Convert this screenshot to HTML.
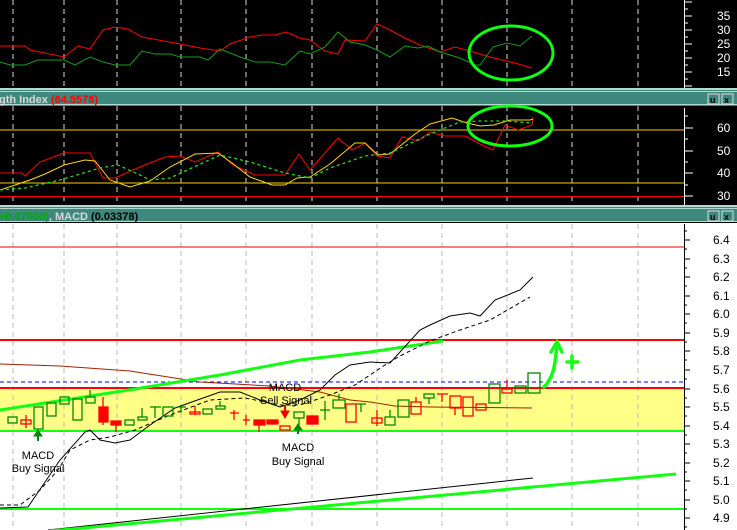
<!DOCTYPE html>
<html><head><meta charset="utf-8"><style>
html,body{margin:0;padding:0;background:#000;}
svg{display:block;font-family:"Liberation Sans",sans-serif;}
</style></head><body>
<svg width="737" height="530" viewBox="0 0 737 530" xmlns="http://www.w3.org/2000/svg">
<!-- top panel -->
<rect x="0" y="0" width="737" height="88" fill="#000"/>
<g stroke="#ddd" stroke-width="1" stroke-dasharray="5,4">
<line x1="13" y1="0" x2="13" y2="88"/><line x1="64" y1="0" x2="64" y2="88"/><line x1="117" y1="0" x2="117" y2="88"/><line x1="181" y1="0" x2="181" y2="88"/><line x1="246" y1="0" x2="246" y2="88"/><line x1="312" y1="0" x2="312" y2="88"/><line x1="377" y1="0" x2="377" y2="88"/><line x1="442" y1="0" x2="442" y2="88"/><line x1="507" y1="0" x2="507" y2="88"/><line x1="572" y1="0" x2="572" y2="88"/><line x1="638" y1="0" x2="638" y2="88"/>
</g>
<line x1="684.5" y1="0" x2="684.5" y2="88" stroke="#fff"/>
<g stroke="#fff"><line x1="684" y1="2" x2="692" y2="2"/><line x1="684" y1="16" x2="692" y2="16"/><line x1="684" y1="30" x2="692" y2="30"/><line x1="684" y1="44" x2="692" y2="44"/><line x1="684" y1="58" x2="692" y2="58"/><line x1="684" y1="72" x2="692" y2="72"/><line x1="684" y1="86" x2="692" y2="86"/>
<line x1="684" y1="9" x2="688" y2="9"/><line x1="684" y1="23" x2="688" y2="23"/><line x1="684" y1="37" x2="688" y2="37"/><line x1="684" y1="51" x2="688" y2="51"/><line x1="684" y1="65" x2="688" y2="65"/><line x1="684" y1="79" x2="688" y2="79"/></g>
<g fill="#fff" font-size="12"><text x="717" y="20">35</text><text x="717" y="34">30</text><text x="717" y="48">25</text><text x="717" y="62">20</text><text x="717" y="76">15</text></g>
<polyline fill="none" stroke="#f00" points="0,46 25,46 30,50 64,57 78,46 90,49 103,30 115,27 128,29 142,37 175,43 200,48 220,51 230,44 250,37 262,35 275,35 286,32 300,38 310,40 325,51 338,54 345,40 365,41 377,24 388,29 405,38 420,45 440,52 455,47 470,51 490,57 515,63 532,68"/>
<polyline fill="none" stroke="#1a9a1a" points="0,62 10,65 25,65 38,60 64,60 75,65 90,57 103,62 115,65 130,65 142,51 155,54 170,54 180,57 200,57 208,60 220,49 240,57 255,62 270,62 285,65 300,51 310,54 325,47 338,32 350,42 365,45 377,50 390,57 405,46 418,48 428,46 440,52 460,58 475,65 480,65 493,47 507,43 520,46 532,36"/>
<ellipse cx="511" cy="53" rx="42" ry="27" fill="none" stroke="#1f1" stroke-width="3"/>
<!-- separator 1 -->
<rect x="0" y="88" width="737" height="18" fill="#3f887d"/>
<rect x="0" y="88" width="737" height="2" fill="#b0dccf"/>
<rect x="0" y="91" width="737" height="1" fill="#b0dccf"/>
<rect x="0" y="104" width="737" height="1" fill="#b0dccf"/>
<text x="-1" y="103" font-size="11" font-weight="bold" fill="#d8d8d8">gth Index <tspan fill="#f00">(64.5578)</tspan></text>
<g><rect x="708" y="94" width="11" height="10" fill="#3f887d" stroke="#ddd"/><text x="710" y="103" font-size="9" font-weight="bold" fill="#000">u</text><rect x="722" y="94" width="11" height="10" fill="#3f887d" stroke="#ddd"/><text x="724" y="103" font-size="9" font-weight="bold" fill="#000">x</text></g>
<!-- RSI panel -->
<rect x="0" y="106" width="737" height="100" fill="#000"/>
<g stroke="#ddd" stroke-dasharray="5,4">
<line x1="13" y1="106" x2="13" y2="205"/><line x1="64" y1="106" x2="64" y2="205"/><line x1="117" y1="106" x2="117" y2="205"/><line x1="181" y1="106" x2="181" y2="205"/><line x1="246" y1="106" x2="246" y2="205"/><line x1="312" y1="106" x2="312" y2="205"/><line x1="377" y1="106" x2="377" y2="205"/><line x1="442" y1="106" x2="442" y2="205"/><line x1="507" y1="106" x2="507" y2="205"/><line x1="572" y1="106" x2="572" y2="205"/><line x1="638" y1="106" x2="638" y2="205"/>
</g>
<line x1="684.5" y1="108" x2="684.5" y2="205" stroke="#fff"/>
<g stroke="#fff"><line x1="684" y1="128" x2="693" y2="128"/><line x1="684" y1="151" x2="693" y2="151"/><line x1="684" y1="173" x2="693" y2="173"/><line x1="684" y1="196" x2="693" y2="196"/>
<line x1="684" y1="116" x2="688" y2="116"/><line x1="684" y1="139" x2="688" y2="139"/><line x1="684" y1="162" x2="688" y2="162"/><line x1="684" y1="185" x2="688" y2="185"/></g>
<g fill="#fff" font-size="12"><text x="717" y="132">60</text><text x="717" y="155">50</text><text x="717" y="177">40</text><text x="717" y="200">30</text></g>
<line x1="0" y1="130" x2="684" y2="130" stroke="#ffcc00"/>
<line x1="0" y1="183" x2="684" y2="183" stroke="#ffcc00"/>
<line x1="0" y1="196.5" x2="684" y2="196.5" stroke="#f00"/>
<polyline fill="none" stroke="#f00" points="0,173 22,173 25,176 40,162 64,153 90,153 103,178 115,178 140,167 165,157 180,156 195,162 218,152 233,165 255,175 285,175 299,154 310,170 338,138 352,150 365,143 377,156 390,158 402,137 418,141 430,132 445,136 465,136 482,145 493,150 505,125 518,130 532,125 533,117"/>
<polyline fill="none" stroke="#ffd700" points="0,190 30,180 45,174 64,165 85,160 95,161 110,180 130,187 150,181 170,167 195,154 218,153 232,163 250,177 272,185 285,185 297,178 310,177 330,164 355,143 365,143 378,155 390,154 415,134 430,124 452,118 467,123 480,126 494,125 510,120 530,120 533,119"/>
<polyline fill="none" stroke="#2d2" stroke-dasharray="3,3" stroke-width="1.3" points="0,190 25,188 60,180 100,168 118,165 140,175 150,180 170,178 220,155 250,162 285,173 310,178 330,168 365,156 390,153 430,134 460,122 480,121 505,121 533,123"/>
<ellipse cx="510" cy="126" rx="42" ry="20" fill="none" stroke="#1f1" stroke-width="3"/>
<!-- separator 2 -->
<rect x="0" y="205" width="737" height="18" fill="#3f887d"/>
<rect x="0" y="205" width="737" height="2" fill="#b0dccf"/>
<rect x="0" y="208" width="737" height="1" fill="#b0dccf"/>
<rect x="0" y="221" width="737" height="1" fill="#b0dccf"/>
<text x="-1" y="220" font-size="11" font-weight="bold" fill="#0a0">+0.07000)<tspan fill="#d8d8d8">, MACD </tspan><tspan fill="#000">(0.03378)</tspan></text>
<g><rect x="708" y="211" width="11" height="10" fill="#3f887d" stroke="#ddd"/><text x="710" y="220" font-size="9" font-weight="bold" fill="#000">u</text><rect x="722" y="211" width="11" height="10" fill="#3f887d" stroke="#ddd"/><text x="724" y="220" font-size="9" font-weight="bold" fill="#000">x</text></g>
<!-- bottom chart -->
<rect x="0" y="222" width="737" height="308" fill="#fff"/>
<line x1="0" y1="222.5" x2="737" y2="222.5" stroke="#000"/>
<rect x="0" y="388" width="684" height="43" fill="#ffff88"/>
<g stroke="#bbb" stroke-dasharray="5,4">
<line x1="13" y1="224" x2="13" y2="530"/><line x1="64" y1="224" x2="64" y2="530"/><line x1="117" y1="224" x2="117" y2="530"/><line x1="181" y1="224" x2="181" y2="530"/><line x1="246" y1="224" x2="246" y2="530"/><line x1="312" y1="224" x2="312" y2="530"/><line x1="377" y1="224" x2="377" y2="530"/><line x1="442" y1="224" x2="442" y2="530"/><line x1="507" y1="224" x2="507" y2="530"/><line x1="572" y1="224" x2="572" y2="530"/><line x1="638" y1="224" x2="638" y2="530"/>
</g>
<line x1="684.5" y1="224" x2="684.5" y2="530" stroke="#000"/>
<g stroke="#000">
<line x1="684" y1="240" x2="690" y2="240"/><line x1="684" y1="259" x2="690" y2="259"/><line x1="684" y1="277" x2="690" y2="277"/><line x1="684" y1="296" x2="690" y2="296"/><line x1="684" y1="314" x2="690" y2="314"/><line x1="684" y1="333" x2="690" y2="333"/><line x1="684" y1="351" x2="690" y2="351"/><line x1="684" y1="370" x2="690" y2="370"/><line x1="684" y1="389" x2="690" y2="389"/><line x1="684" y1="407" x2="690" y2="407"/><line x1="684" y1="426" x2="690" y2="426"/><line x1="684" y1="444" x2="690" y2="444"/><line x1="684" y1="463" x2="690" y2="463"/><line x1="684" y1="481" x2="690" y2="481"/><line x1="684" y1="500" x2="690" y2="500"/><line x1="684" y1="518" x2="690" y2="518"/>
<line x1="684" y1="231" x2="687" y2="231"/><line x1="684" y1="249" x2="687" y2="249"/><line x1="684" y1="268" x2="687" y2="268"/><line x1="684" y1="286" x2="687" y2="286"/><line x1="684" y1="305" x2="687" y2="305"/><line x1="684" y1="323" x2="687" y2="323"/><line x1="684" y1="342" x2="687" y2="342"/><line x1="684" y1="360" x2="687" y2="360"/><line x1="684" y1="379" x2="687" y2="379"/><line x1="684" y1="398" x2="687" y2="398"/><line x1="684" y1="416" x2="687" y2="416"/><line x1="684" y1="435" x2="687" y2="435"/><line x1="684" y1="453" x2="687" y2="453"/><line x1="684" y1="472" x2="687" y2="472"/><line x1="684" y1="490" x2="687" y2="490"/><line x1="684" y1="509" x2="687" y2="509"/><line x1="684" y1="527" x2="687" y2="527"/>
</g>
<g fill="#000" font-size="12">
<text x="713" y="244">6.4</text><text x="713" y="263">6.3</text><text x="713" y="281">6.2</text><text x="713" y="300">6.1</text><text x="713" y="318">6.0</text><text x="713" y="337">5.9</text><text x="713" y="355">5.8</text><text x="713" y="374">5.7</text><text x="713" y="393">5.6</text><text x="713" y="411">5.5</text><text x="713" y="430">5.4</text><text x="713" y="448">5.3</text><text x="713" y="467">5.2</text><text x="713" y="485">5.1</text><text x="713" y="504">5.0</text><text x="713" y="522">4.9</text>
</g>
<line x1="0" y1="247" x2="684" y2="247" stroke="#e00"/>
<line x1="0" y1="340" x2="684" y2="340" stroke="#f00" stroke-width="2"/>
<line x1="0" y1="382" x2="684" y2="382" stroke="#00e" stroke-dasharray="4,3"/>
<line x1="0" y1="388" x2="684" y2="388" stroke="#f00" stroke-width="2"/>
<line x1="0" y1="431" x2="684" y2="431" stroke="#1f1" stroke-width="2"/>
<line x1="0" y1="509" x2="684" y2="509" stroke="#1f1" stroke-width="2"/>
<line x1="48" y1="530" x2="533" y2="478" stroke="#000"/>
<line x1="50" y1="531" x2="676" y2="474" stroke="#1f1" stroke-width="3"/>
<polyline fill="none" stroke="#a02000" points="0,364 60,366 130,371 200,382 270,386 320,392 350,400 370,402 395,406 430,407 532,408"/>
<polyline fill="none" stroke="#1f1" stroke-width="3" points="0,410 135,389 220,375 300,360 370,352 443,341"/>
<polyline fill="none" stroke="#000" points="0,508 28,507 60,460 85,432 90,430 100,440 115,443 130,440 150,425 175,408 220,392 240,392 260,400 280,407 300,400 320,390 335,375 350,365 370,362 390,363 420,330 430,325 450,316 470,313 480,316 495,300 520,290 533,277"/>
<polyline fill="none" stroke="#000" stroke-dasharray="4,3" points="0,505 20,505 40,490 58,470 70,450 90,440 110,437 135,430 170,415 210,400 245,398 280,405 300,405 330,395 355,385 385,365 400,356 430,341 460,330 490,320 530,297"/>
<!-- candles -->
<g stroke-width="1.3">
<g stroke="#080" fill="none">
<rect x="8" y="417" width="9" height="6"/><rect x="34" y="407" width="9" height="22"/><rect x="47" y="403" width="9" height="13"/><rect x="60" y="397" width="9" height="7"/><rect x="73" y="399" width="9" height="21"/><rect x="86" y="397" width="9" height="6"/><line x1="90" y1="390" x2="90" y2="397"/>
<rect x="125" y="420" width="9" height="5"/><rect x="138" y="417" width="9" height="3"/><line x1="142" y1="408" x2="142" y2="417"/>
<line x1="150" y1="407" x2="161" y2="407"/><line x1="155" y1="407" x2="155" y2="418"/>
<rect x="163" y="407" width="10" height="9"/><line x1="177" y1="407" x2="186" y2="407"/><line x1="181" y1="407" x2="181" y2="413"/>
<rect x="203" y="409" width="9" height="5"/><rect x="216" y="406" width="9" height="3"/><line x1="220" y1="401" x2="220" y2="406"/>
<rect x="294" y="412" width="10" height="6"/><line x1="299" y1="418" x2="299" y2="425"/>
<line x1="320" y1="410" x2="330" y2="410"/><line x1="325" y1="401" x2="325" y2="420"/>
<rect x="333" y="400" width="12" height="8"/><line x1="339" y1="394" x2="339" y2="400"/>
<line x1="356" y1="404" x2="366" y2="404"/><line x1="361" y1="404" x2="361" y2="412"/>
<rect x="385" y="417" width="10" height="8"/><line x1="390" y1="410" x2="390" y2="417"/>
<rect x="398" y="400" width="11" height="17"/><rect x="424" y="394" width="10" height="4"/><line x1="429" y1="398" x2="429" y2="404"/>
<rect x="489" y="384" width="11" height="19"/><rect x="515" y="386" width="11" height="7"/><rect x="528" y="373" width="12" height="20"/>
</g>
<g stroke="#f00" fill="none">
<rect x="21" y="420" width="10" height="4"/><line x1="26" y1="415" x2="26" y2="428"/>
<rect x="190" y="412" width="10" height="2"/><line x1="195" y1="406" x2="195" y2="415"/>
<line x1="230" y1="413" x2="239" y2="413"/><line x1="234" y1="410" x2="234" y2="420"/>
<line x1="243" y1="420" x2="250" y2="420"/><line x1="246" y1="415" x2="246" y2="425"/>
<rect x="280" y="426" width="10" height="4"/>
<rect x="346" y="404" width="10" height="18"/>
<rect x="372" y="418" width="10" height="5"/><line x1="377" y1="410" x2="377" y2="426"/>
<rect x="411" y="402" width="10" height="12"/><line x1="416" y1="397" x2="416" y2="402"/>
<line x1="437" y1="394" x2="448" y2="394"/><line x1="442" y1="394" x2="442" y2="402"/>
<rect x="450" y="396" width="11" height="12"/><line x1="455" y1="408" x2="455" y2="415"/>
<rect x="463" y="397" width="10" height="19"/><rect x="476" y="404" width="10" height="6"/>
<rect x="502" y="389" width="10" height="4"/><line x1="507" y1="380" x2="507" y2="389"/>
</g>
<g fill="#f00" stroke="#f00">
<rect x="99" y="407" width="9" height="15"/><line x1="103" y1="397" x2="103" y2="425"/>
<rect x="111" y="421" width="10" height="4"/><line x1="116" y1="425" x2="116" y2="432"/>
<rect x="254" y="420" width="11" height="5"/><line x1="259" y1="425" x2="259" y2="432"/>
<rect x="267" y="420" width="11" height="4"/><rect x="307" y="416" width="11" height="8"/>
</g>
</g>
<!-- signal arrows -->
<g fill="#080" stroke="#080">
<line x1="38" y1="434" x2="38" y2="441" stroke-width="2"/><path d="M34,436 L38,430 L42,436 Z"/>
<line x1="298" y1="428" x2="298" y2="434" stroke-width="2"/><path d="M294,430 L298,424 L302,430 Z"/>
</g>
<g fill="#e00" stroke="#e00"><line x1="285" y1="405" x2="285" y2="412" stroke-width="2"/><path d="M281,411 L285,418 L289,411 Z"/></g>
<g fill="#000" font-size="11" text-anchor="middle">
<text x="38" y="459">MACD</text><text x="38" y="472">Buy Signal</text>
<text x="298" y="451">MACD</text><text x="298" y="465">Buy Signal</text>
<text x="285" y="391">MACD</text><text x="286" y="404">Sell Signal</text>
</g>
<!-- hand-drawn arrow -->
<path d="M544,387 Q553,378 555,362 L557,346" fill="none" stroke="#1f1" stroke-width="3.5" stroke-linecap="round"/>
<path d="M551,352 L557,342 L562,352" fill="none" stroke="#1f1" stroke-width="3.5" stroke-linecap="round"/>
<path d="M567,362 L578,362 M572,356 L572,368" stroke="#1f1" stroke-width="3.5" stroke-linecap="round"/>
</svg>
</body></html>
